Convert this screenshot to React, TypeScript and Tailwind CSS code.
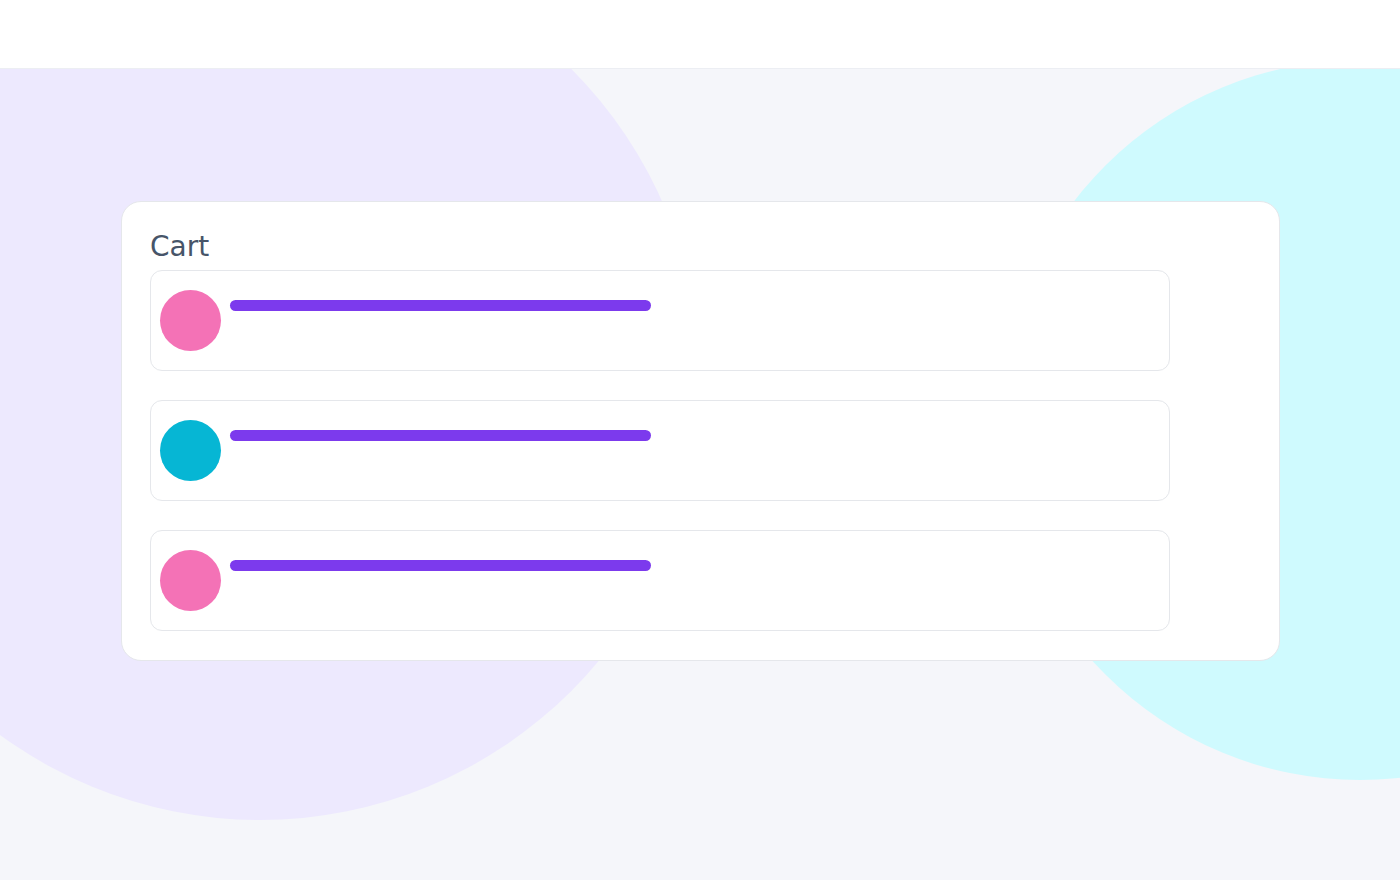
import React from 'react'

const items = [
  { id: 1, color: 'bg-[#f472b6]' },
  { id: 2, color: 'bg-[#06b6d4]' },
  { id: 3, color: 'bg-[#f472b6]' }
]

function CartRow({ color }: { color: string }) {
  return (
    <div className="flex h-[101px] w-[1020px] items-center rounded-xl border border-[#e5e7eb] bg-white pl-[9px]">
      <div className={`h-[61px] w-[61px] shrink-0 rounded-full ${color}`} />
      <div className="ml-[9px] flex h-full flex-col pt-[29px]">
        <div className="h-[11px] w-[421px] rounded-full bg-[#7c3aed]" />
      </div>
    </div>
  )
}

export default function App() {
  return (
    <div className="relative h-screen overflow-hidden bg-[#f5f6fa] font-['DejaVu_Sans',sans-serif]">
      {/* background blobs */}
      <div className="absolute left-[-180px] top-[-60px] h-[880px] w-[880px] rounded-full bg-[#ede9fe]" />
      <div className="absolute left-[1000px] top-[60px] h-[720px] w-[720px] rounded-full bg-[#cffafe]" />

      <header className="relative z-10 h-[69px] border-b border-[#eceef3] bg-white" />

      <main className="relative z-10 pt-[132px]">
        <div className="ml-[121px] w-[1159px] rounded-[20px] border border-[#e5e7eb] bg-white p-7 pb-[29px]">
          <h2 className="mb-[7px] text-[28px] leading-[33px] text-[#475569]">Cart</h2>
          <div className="flex flex-col gap-[29px]">
            {items.map((item) => (
              <CartRow key={item.id} color={item.color} />
            ))}
          </div>
        </div>
      </main>
    </div>
  )
}
